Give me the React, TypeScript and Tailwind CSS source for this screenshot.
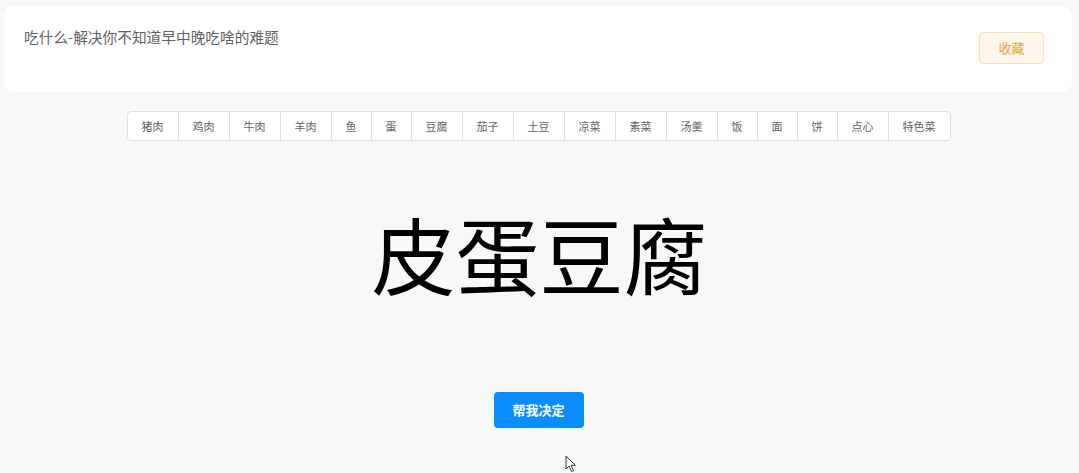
import React, { useState } from 'react';

const foods = ['猪肉', '鸡肉', '牛肉', '羊肉', '鱼', '蛋', '豆腐', '茄子', '土豆', '凉菜', '素菜', '汤羹', '饭', '面', '饼', '点心', '特色菜'];

const font = { fontFamily: '"Noto Sans CJK SC", "Liberation Sans", sans-serif' };

const App = () => {
  const [dish] = useState('皮蛋豆腐');

  return (
    <div className="relative min-h-[473px] w-full bg-[#f8f8f8] pt-[6px]" style={font}>
      <div className="mx-[7px] ml-[4px] flex h-[86px] items-start justify-between rounded-[10px] bg-white px-[20px]">
        <div className="mt-[21px] text-[14.7px] leading-[20px] text-[#5f6166]">吃什么-解决你不知道早中晚吃啥的难题</div>
        <button className="mr-[8px] mt-[26px] h-[32px] w-[65px] rounded-[4px] border border-[#f7dfb2] bg-[#fdf6ec] text-[13px] text-[#e6a23c]">
          收藏
        </button>
      </div>

      <div className="mt-[19px] flex justify-center pr-[2px]">
        <div className="flex h-[30px] overflow-hidden rounded-[4px] border border-[#dcdfe6] bg-white">
          {foods.map((f, i) => (
            <div
              key={f}
              className={`flex items-center px-[14px] text-[11px] text-[#606266] ${i < foods.length - 1 ? 'border-r border-[#dcdfe6]' : ''}`}
            >
              {f}
            </div>
          ))}
        </div>
      </div>

      <div className="mt-[56px] flex justify-center">
        <div className="text-[84px] leading-[112px] text-black">{dish}</div>
      </div>

      <div className="mt-[83px] flex justify-center pr-[2px]">
        <button className="h-[36px] w-[90px] rounded-[4px] bg-[#0a8dff] text-[13px] font-bold text-white">帮我决定</button>
      </div>

      <svg className="absolute left-[565px] top-[455px]" width="12" height="18" viewBox="0 0 12 18">
        <path d="M1 1 L1 14 L4 11 L6.5 16.5 L8.5 15.6 L6 10.3 L10.3 10.3 Z" fill="white" stroke="#333" strokeWidth="1" strokeLinejoin="round" />
      </svg>
    </div>
  );
};

export default App;
